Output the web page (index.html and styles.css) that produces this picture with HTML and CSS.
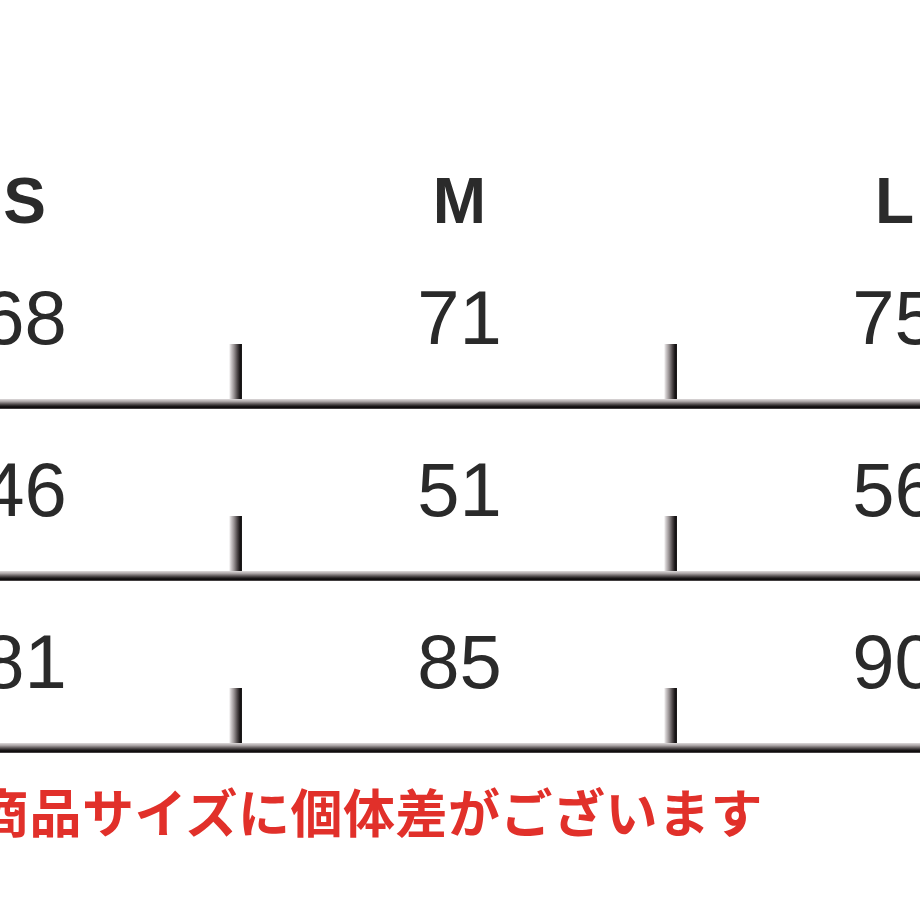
FILE: index.html
```html
<!DOCTYPE html>
<html lang="ja">
<head>
<meta charset="utf-8">
<title>サイズ表</title>
<link rel="stylesheet" href="styles.css">
</head>
<body>
<main class="chart">
  <div class="head">
    <div class="cell">S</div>
    <div class="cell">M</div>
    <div class="cell">L</div>
  </div>
  <div class="row">
    <div class="cells">
      <div class="cell tick">68</div>
      <div class="cell tick">71</div>
      <div class="cell">75</div>
    </div>
    <div class="rule"></div>
  </div>
  <div class="row">
    <div class="cells">
      <div class="cell tick">46</div>
      <div class="cell tick">51</div>
      <div class="cell">56</div>
    </div>
    <div class="rule"></div>
  </div>
  <div class="row">
    <div class="cells">
      <div class="cell tick">81</div>
      <div class="cell tick">85</div>
      <div class="cell">90</div>
    </div>
    <div class="rule"></div>
  </div>
  <p class="note">商品サイズに個体差がございます</p>
</main>
</body>
</html>
```

FILE: styles.css
```css
html, body {
  margin: 0;
  padding: 0;
  background: #ffffff;
  overflow: hidden;
}

body {
  width: 920px;
  height: 920px;
}

.chart {
  width: 1305px;
  margin-left: -193px;
  padding-top: 169px;
  font-family: "Liberation Sans", Arial, sans-serif;
  color: #2a2a2a;
}

.head {
  display: flex;
  font-size: 64px;
  line-height: 64px;
  font-weight: 700;
  color: #2b2b2b;
}

.cell {
  flex: 1 1 0;
  text-align: center;
}

.row {
  display: flex;
  flex-direction: column;
}

.head + .row {
  margin-top: 47px;
}

.row + .row {
  margin-top: 43px;
}

.cells {
  display: flex;
  font-size: 76px;
  line-height: 76px;
  height: 119px;
}

.tick {
  background-image: linear-gradient(to right,
    rgba(255, 255, 255, 0) 0%,
    #d6d2d3 12%,
    #9a9495 35%,
    #4d4748 60%,
    #141112 80%,
    #1c1a1a 90%,
    #8a8586 100%);
  background-repeat: no-repeat;
  background-position: right -1px bottom;
  background-size: 14px 55px;
}

.rule {
  height: 10px;
  background-image: linear-gradient(to bottom,
    #dedadb 0%,
    #a9a3a4 25%,
    #5a5455 50%,
    #1a1718 72%,
    #0c0a0b 88%,
    #6a6566 100%);
}

.note {
  margin: 32px 0 0 170px;
  font-family: "Noto Sans CJK JP", "Noto Sans", sans-serif;
  font-weight: 700;
  font-size: 52px;
  line-height: 52px;
  letter-spacing: 0.5px;
  color: #e1302a;
  white-space: nowrap;
}
```
